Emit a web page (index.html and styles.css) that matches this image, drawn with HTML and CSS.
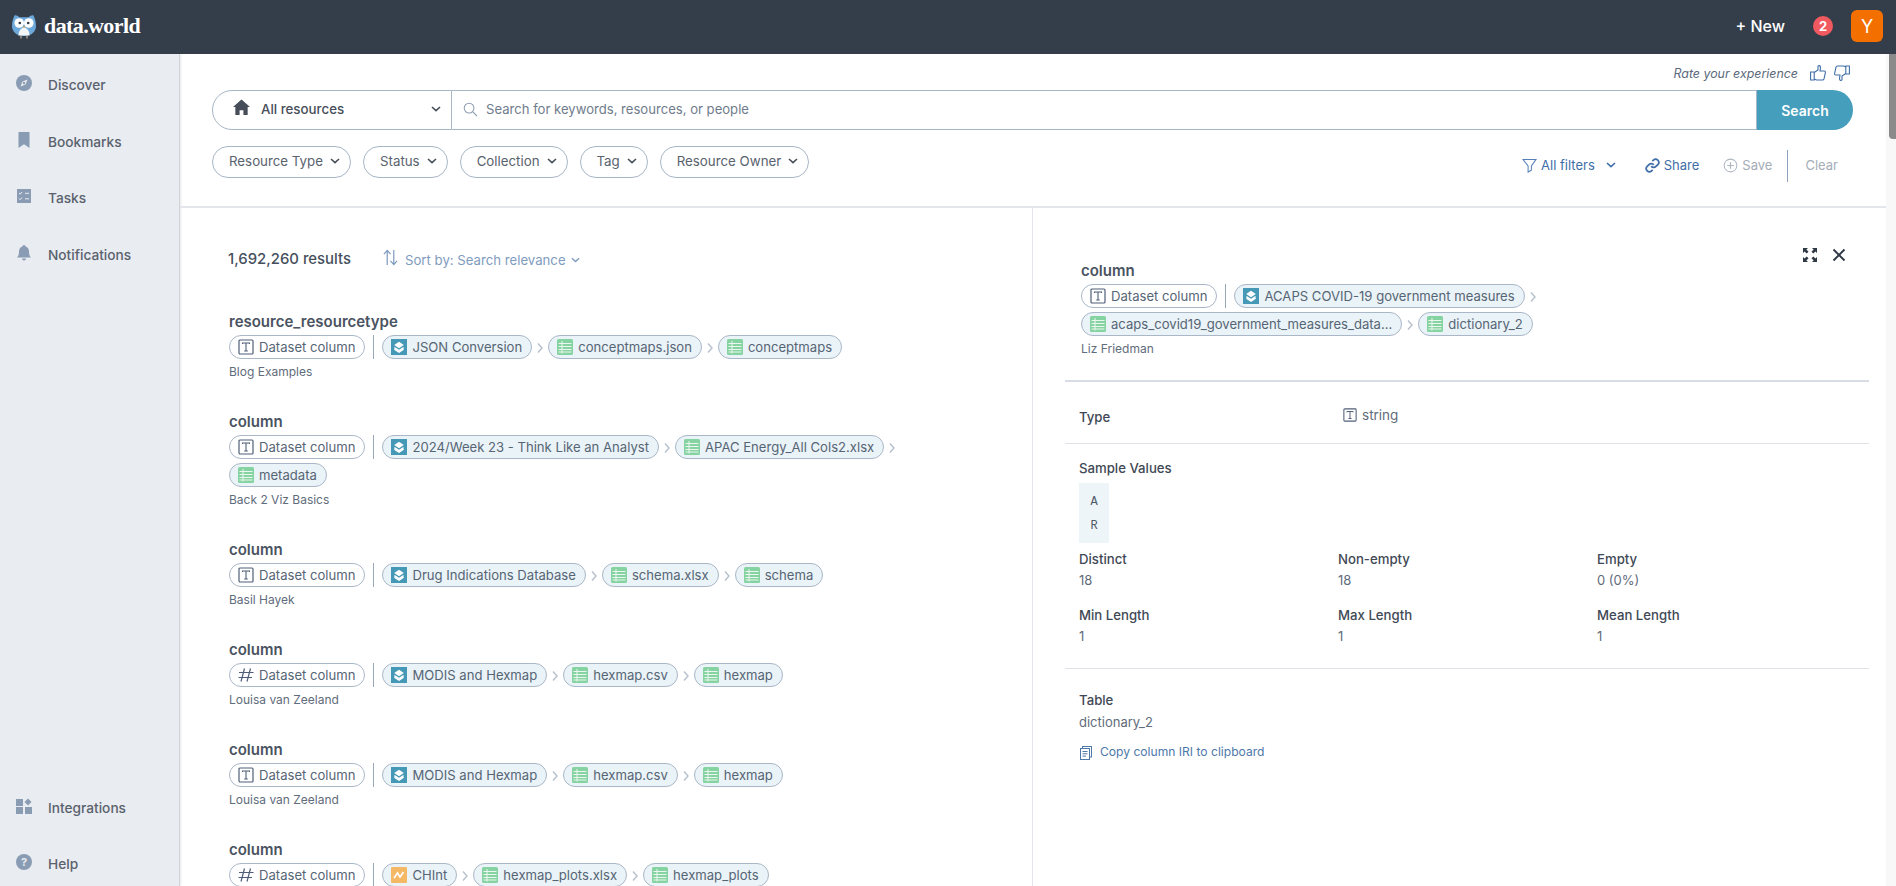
FILE: index.html
```html
<!DOCTYPE html>
<html lang="en">
<head>
<meta charset="utf-8">
<title>data.world</title>
<link rel="stylesheet" href="styles.css">
</head>
<body>
<svg class="sprite" aria-hidden="true">
  <symbol id="i-t" viewBox="0 0 16 16"><rect x="1" y="1" width="14" height="14" rx="1" fill="none" stroke="#4f5f78" stroke-width="1.2"/><path d="M4.5 5V4h7v1M8 4v8M6.2 12h3.6" fill="none" stroke="#4f5f78" stroke-width="1.1"/></symbol>
  <symbol id="i-hash" viewBox="0 0 16 16"><path d="M6.5 1.5 3 14.5M12.5 1.5 9 14.5M1 5.5h14.5M0.5 10.5H14" fill="none" stroke="#4f5f78" stroke-width="1.2"/></symbol>
  <symbol id="i-ds" viewBox="0 0 16 16"><rect width="16" height="16" fill="#4598b6"/><path d="M8 2.8 12.8 6 8 9.2 3.2 6Z" fill="#fff"/><path d="M3.4 8.6 8 11.6l4.6-3M3.4 10.2 8 13.2l4.6-3" fill="none" stroke="#fff" stroke-width="1.3"/></symbol>
  <symbol id="i-tb" viewBox="0 0 16 16"><rect width="16" height="16" rx="1.5" fill="#86d3a2"/><path d="M1.5 4.5h13M1.5 7.5h13M1.5 10.5h13M1.5 13h13M5 2v12.5" stroke="#eaf6ef" stroke-width="1" fill="none"/></symbol>
  <symbol id="i-ins" viewBox="0 0 16 16"><rect width="16" height="16" rx="1" fill="#f5b966"/><path d="M3 11 6.5 6l2.5 4 3.5-5" fill="none" stroke="#fff" stroke-width="1.6"/></symbol>
  <symbol id="i-chev" viewBox="0 0 10 6"><path d="M1 1l4 3.6L9 1" fill="none" stroke="currentColor" stroke-width="1.6"/></symbol>
  <symbol id="i-sep" viewBox="0 0 8 12"><path d="M2 1.5 6 6l-4 4.5" fill="none" stroke="#b6c0cc" stroke-width="1.4"/></symbol>
</svg>

<header class="topbar">
  <a class="brand">
    <svg class="owl" viewBox="0 0 24 26"><path d="M2.500 2.500C4 2 6 3 7.500 4.200h9C18 3 20 2 21.500 2.500 23 6 24 9 24 13c0 6-5 10-12 10S0 19 0 13C0 9 1 6 2.500 2.500Z" fill="#6ea9dc"/><circle cx="7.200" cy="10" r="4.800" fill="#fff"/><circle cx="16.800" cy="10" r="4.800" fill="#fff"/><circle cx="7.800" cy="10" r="1.300" fill="#2f3a48"/><circle cx="16.200" cy="10" r="1.300" fill="#2f3a48"/><path d="M6.500 22.500c0-5 2.500-7 5.500-8.500 3 1.500 5.500 3.500 5.500 8.500Z" fill="#f4f5f6"/><path d="M12 12.500l-1.400 2.200h2.800Z" fill="#d9a066"/><path d="M9 23v2.500M15 23v2.500" stroke="#b9a48c" stroke-width="1.300"/></svg>
    <span class="brand-name">data.world</span>
  </a>
  <div class="top-actions">
    <span class="new">+ New</span>
    <span class="badge">2</span>
    <span class="avatar">Y</span>
  </div>
</header>

<div class="shell">
  <nav class="sidebar">
    <div class="nav-group">
      <a class="nav-item"><svg class="nav-icon" viewBox="0 0 16 16"><circle cx="8" cy="8" r="8" fill="#8a9cb3"/><path d="M11.500 4.500 9.500 9.500 4.500 11.500 6.500 6.500Z" fill="#e9ecf1"/><circle cx="8" cy="8" r="1.200" fill="#8a9cb3"/></svg>Discover</a>
      <a class="nav-item"><svg class="nav-icon" viewBox="0 0 16 16"><path d="M2.500 0h11v16L8 12.300 2.500 16Z" fill="#8a9cb3"/></svg>Bookmarks</a>
      <a class="nav-item"><svg class="nav-icon" viewBox="0 0 16 16"><rect x="1" y="1" width="14" height="14" fill="#8a9cb3"/><path d="M3 5l1.200 1.200L6 4M3 10.500l1.200 1.200L6 9.500M9 5.300h4M9 10.800h4" fill="none" stroke="#e9ecf1" stroke-width="1"/></svg>Tasks</a>
      <a class="nav-item"><svg class="nav-icon" viewBox="0 0 16 16"><path d="M8 0a1.200 1.200 0 0 1 1.200 1.300C11.700 2 13 4 13 6.500c0 3 .6 4.500 2 6H1c1.400-1.500 2-3 2-6C3 4 4.300 2 6.800 1.300A1.200 1.200 0 0 1 8 0ZM6 13.500h4a2 2 0 0 1-4 0Z" fill="#8a9cb3"/></svg>Notifications</a>
    </div>
    <div class="nav-group">
      <a class="nav-item"><svg class="nav-icon" viewBox="0 0 16 16"><rect x="0" y="1" width="7" height="7" fill="#8a9cb3"/><path d="M12 .5l3.500 3.500L12 7.500 8.500 4Z" fill="#8a9cb3"/><rect x="0" y="9" width="7" height="7" fill="#8a9cb3"/><rect x="9" y="9" width="7" height="7" fill="#8a9cb3"/></svg>Integrations</a>
      <a class="nav-item"><svg class="nav-icon" viewBox="0 0 16 16"><circle cx="8" cy="8" r="8" fill="#8a9cb3"/><text x="8" y="11.500" text-anchor="middle" class="help-q">?</text></svg>Help</a>
    </div>
  </nav>

  <div class="content">
    <section class="toolbar">
      <div class="rate">
        <em>Rate your experience</em>
        <svg class="thumb" viewBox="0 0 16 16"><path d="M.6 7h3.600v8H.6ZM4.200 7.500 8 5V1.500C8 .5 9.800.2 10.300 1.500 10.800 3 10 5 10 6h4.200c1 0 1.400.8 1.200 1.600l-1.400 6.300c-.2.800-.7 1.100-1.400 1.100H6.500l-2.300-1" fill="none" stroke="#3f6ea8" stroke-width="1.100"/></svg>
        <svg class="thumb" viewBox="0 0 16 16"><path d="M15.400 9h-3.600V1h3.600ZM11.800 8.500 8 11v3.500c0 1-1.800 1.300-2.300 0C5.200 13 6 11 6 10H1.800C.8 10 .4 9.200.6 8.400L2 2.100C2.200 1.300 2.700 1 3.400 1h6.100l2.300 1" fill="none" stroke="#3f6ea8" stroke-width="1.100"/></svg>
      </div>
      <div class="searchbar">
        <div class="scope">
          <svg class="home" viewBox="0 0 16 16"><path d="M8 .5 16 7.500h-2.200V15H9.800v-4.500H6.200V15H2.200V7.500H0Z" fill="#474e59"/></svg>
          <span class="scope-label">All resources</span>
          <svg class="chev" viewBox="0 0 10 6"><use href="#i-chev"/></svg>
        </div>
        <div class="query">
          <svg class="lens" viewBox="0 0 16 16"><circle cx="6.500" cy="6.500" r="5.200" fill="none" stroke="#8d9cb0" stroke-width="1.100"/><path d="M10.500 10.500 15 15" stroke="#8d9cb0" stroke-width="1.200"/></svg>
          <span>Search for keywords, resources, or people</span>
        </div>
        <button class="search-btn">Search</button>
      </div>
      <div class="filters">
        <div class="filter-pills">
          <span class="fpill">Resource Type<svg class="chev" viewBox="0 0 10 6"><use href="#i-chev"/></svg></span>
          <span class="fpill">Status<svg class="chev" viewBox="0 0 10 6"><use href="#i-chev"/></svg></span>
          <span class="fpill">Collection<svg class="chev" viewBox="0 0 10 6"><use href="#i-chev"/></svg></span>
          <span class="fpill">Tag<svg class="chev" viewBox="0 0 10 6"><use href="#i-chev"/></svg></span>
          <span class="fpill">Resource Owner<svg class="chev" viewBox="0 0 10 6"><use href="#i-chev"/></svg></span>
        </div>
        <div class="filter-actions">
          <span class="fa fa-all"><svg class="fa-ic" viewBox="0 0 16 16"><path d="M1 1.500h14L10 8.500v4.500l-3.500 2V8.500Z" fill="none" stroke="#5480b5" stroke-width="1.100"/></svg>All filters<svg class="chev fa-chev" viewBox="0 0 10 6"><use href="#i-chev"/></svg></span>
          <span class="fa fa-share"><svg class="fa-ic" viewBox="0 0 24 24"><path d="M10 13a5 5 0 0 0 7.540.54l3-3a5 5 0 0 0-7.070-7.070l-1.720 1.710M14 11a5 5 0 0 0-7.540-.54l-3 3a5 5 0 0 0 7.070 7.070l1.710-1.710" fill="none" stroke="#3f6ea8" stroke-width="2.800"/></svg>Share</span>
          <span class="fa fa-save"><svg class="fa-ic" viewBox="0 0 16 16"><circle cx="8" cy="8" r="6.800" fill="none" stroke="#aeb6c0" stroke-width="1.100"/><path d="M8 4.500v7M4.500 8h7" stroke="#aeb6c0" stroke-width="1.300"/></svg>Save</span>
          <span class="fa-div"></span>
          <span class="fa fa-clear">Clear</span>
        </div>
      </div>
    </section>

    <div class="split">
      <section class="results">
        <div class="results-head">
          <strong>1,692,260 results</strong>
          <svg class="sort-ic" viewBox="0 0 16 18"><path d="M4.500 17V2M1 5.500 4.500 1.500 8 5.500M11.500 1v15M8 12.500l3.500 4 3.500-4" fill="none" stroke="#7f9cc0" stroke-width="1.300"/></svg>
          <span class="sort">Sort by: Search relevance<svg class="chev" viewBox="0 0 10 6"><use href="#i-chev"/></svg></span>
        </div>

        <article class="item">
          <h3>resource_resourcetype</h3>
          <div class="crumbs">
            <span class="pill plain"><svg class="pic"><use href="#i-t"/></svg>Dataset column</span><span class="vr"></span>
            <span class="pill"><svg class="pic"><use href="#i-ds"/></svg>JSON Conversion</span><svg class="sep"><use href="#i-sep"/></svg>
            <span class="pill"><svg class="pic"><use href="#i-tb"/></svg>conceptmaps.json</span><svg class="sep"><use href="#i-sep"/></svg>
            <span class="pill"><svg class="pic"><use href="#i-tb"/></svg>conceptmaps</span>
          </div>
          <p class="owner">Blog Examples</p>
        </article>

        <article class="item">
          <h3>column</h3>
          <div class="crumbs">
            <span class="pill plain"><svg class="pic"><use href="#i-t"/></svg>Dataset column</span><span class="vr"></span>
            <span class="pill"><svg class="pic"><use href="#i-ds"/></svg>2024/Week 23 - Think Like an Analyst</span><svg class="sep"><use href="#i-sep"/></svg>
            <span class="pill"><svg class="pic"><use href="#i-tb"/></svg>APAC Energy_All Cols2.xlsx</span><svg class="sep"><use href="#i-sep"/></svg>
            <span class="pill"><svg class="pic"><use href="#i-tb"/></svg>metadata</span>
          </div>
          <p class="owner">Back 2 Viz Basics</p>
        </article>

        <article class="item">
          <h3>column</h3>
          <div class="crumbs">
            <span class="pill plain"><svg class="pic"><use href="#i-t"/></svg>Dataset column</span><span class="vr"></span>
            <span class="pill"><svg class="pic"><use href="#i-ds"/></svg>Drug Indications Database</span><svg class="sep"><use href="#i-sep"/></svg>
            <span class="pill"><svg class="pic"><use href="#i-tb"/></svg>schema.xlsx</span><svg class="sep"><use href="#i-sep"/></svg>
            <span class="pill"><svg class="pic"><use href="#i-tb"/></svg>schema</span>
          </div>
          <p class="owner">Basil Hayek</p>
        </article>

        <article class="item">
          <h3>column</h3>
          <div class="crumbs">
            <span class="pill plain"><svg class="pic"><use href="#i-hash"/></svg>Dataset column</span><span class="vr"></span>
            <span class="pill"><svg class="pic"><use href="#i-ds"/></svg>MODIS and Hexmap</span><svg class="sep"><use href="#i-sep"/></svg>
            <span class="pill"><svg class="pic"><use href="#i-tb"/></svg>hexmap.csv</span><svg class="sep"><use href="#i-sep"/></svg>
            <span class="pill"><svg class="pic"><use href="#i-tb"/></svg>hexmap</span>
          </div>
          <p class="owner">Louisa van Zeeland</p>
        </article>

        <article class="item">
          <h3>column</h3>
          <div class="crumbs">
            <span class="pill plain"><svg class="pic"><use href="#i-t"/></svg>Dataset column</span><span class="vr"></span>
            <span class="pill"><svg class="pic"><use href="#i-ds"/></svg>MODIS and Hexmap</span><svg class="sep"><use href="#i-sep"/></svg>
            <span class="pill"><svg class="pic"><use href="#i-tb"/></svg>hexmap.csv</span><svg class="sep"><use href="#i-sep"/></svg>
            <span class="pill"><svg class="pic"><use href="#i-tb"/></svg>hexmap</span>
          </div>
          <p class="owner">Louisa van Zeeland</p>
        </article>

        <article class="item">
          <h3>column</h3>
          <div class="crumbs">
            <span class="pill plain"><svg class="pic"><use href="#i-hash"/></svg>Dataset column</span><span class="vr"></span>
            <span class="pill"><svg class="pic"><use href="#i-ins"/></svg>CHInt</span><svg class="sep"><use href="#i-sep"/></svg>
            <span class="pill"><svg class="pic"><use href="#i-tb"/></svg>hexmap_plots.xlsx</span><svg class="sep"><use href="#i-sep"/></svg>
            <span class="pill"><svg class="pic"><use href="#i-tb"/></svg>hexmap_plots</span>
          </div>
        </article>
      </section>

      <aside class="detail">
        <div class="detail-tools">
          <svg class="tool" viewBox="0 0 14 14"><path d="M0 0h5L3.400 1.600 5.500 3.700 3.700 5.500 1.600 3.400 0 5ZM14 0v5l-1.600-1.600-2.100 2.100-1.800-1.800 2.100-2.100L9 0ZM0 14V9l1.600 1.600 2.100-2.100 1.800 1.800-2.100 2.100L5 14ZM14 14H9l1.600-1.600-2.100-2.100 1.800-1.800 2.100 2.100L14 9Z" fill="#2f3845"/></svg>
          <svg class="tool" viewBox="0 0 14 14"><path d="M1.500 1.500l11 11M12.500 1.500l-11 11" stroke="#2f3845" stroke-width="1.900"/></svg>
        </div>
        <div class="d-head">
          <h3>column</h3>
          <div class="crumbs">
            <span class="pill plain"><svg class="pic"><use href="#i-t"/></svg>Dataset column</span><span class="vr"></span>
            <span class="pill"><svg class="pic"><use href="#i-ds"/></svg>ACAPS COVID-19 government measures</span><svg class="sep"><use href="#i-sep"/></svg>
            <span class="pill"><svg class="pic"><use href="#i-tb"/></svg>acaps_covid19_government_measures_data...</span><svg class="sep"><use href="#i-sep"/></svg>
            <span class="pill"><svg class="pic"><use href="#i-tb"/></svg>dictionary_2</span>
          </div>
          <p class="owner">Liz Friedman</p>
        </div>

        <div class="d-type">
          <span class="label">Type</span>
          <span class="type-val"><svg class="pic-sm"><use href="#i-t"/></svg>string</span>
        </div>

        <div class="d-stats">
          <div class="label">Sample Values</div>
          <div class="samples"><span>A</span><span>R</span></div>
          <div class="stat-grid">
            <div class="stat"><span class="label">Distinct</span><span class="val">18</span></div>
            <div class="stat"><span class="label">Non-empty</span><span class="val">18</span></div>
            <div class="stat"><span class="label">Empty</span><span class="val">0 (0%)</span></div>
            <div class="stat"><span class="label">Min Length</span><span class="val">1</span></div>
            <div class="stat"><span class="label">Max Length</span><span class="val">1</span></div>
            <div class="stat"><span class="label">Mean Length</span><span class="val">1</span></div>
          </div>
        </div>

        <div class="d-table">
          <div class="stat"><span class="label">Table</span><span class="val">dictionary_2</span></div>
          <a class="copy"><svg class="copy-ic" viewBox="0 0 12 14"><rect x="2.500" y=".5" width="9" height="10.500" fill="none" stroke="#4d78aa"/><rect x=".5" y="2.500" width="9" height="11" fill="#fff" stroke="#4d78aa"/><path d="M2.500 5.500h5M2.500 7.800h5M2.500 10.100h3.500" stroke="#4d78aa"/></svg>Copy column IRI to clipboard</a>
        </div>
      </aside>
    </div>
  </div>

  <div class="scrollbar"><div class="scroll-thumb"></div></div>
</div>
</body>
</html>
```

FILE: styles.css
```css
* { box-sizing: border-box; }
html, body { margin: 0; height: 100%; overflow: hidden; }
body {
  font-family: Inter, "Noto Sans", sans-serif;
  font-size: 13px;
  color: #4f5a68;
  background: #fff;
  display: flex;
  flex-direction: column;
  height: 886px;
}
.sprite { display: none; }
h3, p { margin: 0; }

/* top bar */
.topbar {
  flex: 0 0 54px;
  background: #343d4a;
  display: flex;
  align-items: center;
  justify-content: space-between;
  padding: 0 13px 2px 12px;
}
.brand { display: flex; align-items: center; gap: 8px; }
.owl { width: 24px; height: 26px; }
.brand-name {
  font-family: "Liberation Serif", serif;
  font-weight: 700;
  font-size: 22px;
  letter-spacing: -0.6px;
  color: #fff;
}
.top-actions { display: flex; align-items: center; }
.new { font-size: 16px; font-weight: 500; color: #fff; margin-right: 28px; }
.badge {
  width: 20px; height: 20px; border-radius: 50%;
  background: #f0595f; color: #fff;
  font-size: 13px; font-weight: 700;
  display: flex; align-items: center; justify-content: center;
  margin-right: 18px;
}
.avatar {
  width: 32px; height: 32px; border-radius: 6px;
  background: #f37000; color: #fff; font-size: 18px;
  display: flex; align-items: center; justify-content: center;
}

/* shell */
.shell { flex: 1; display: flex; min-height: 0; }
.sidebar {
  flex: 0 0 180px;
  background: #e9ecf1;
  border-right: 1px solid #d0d5dc;
  box-shadow: 1px 0 2px rgba(60,70,85,.12);
  display: flex;
  flex-direction: column;
  justify-content: space-between;
  padding: 19.500px 0 10px;
}
.nav-group { display: flex; flex-direction: column; gap: 33px; }
.nav-item {
  display: flex; align-items: center; gap: 16px;
  height: 23.500px;
  padding-left: 16px;
  font-size: 13.700px; font-weight: 500; color: #5a626d;
}
.nav-icon { width: 16px; height: 16px; flex: none; margin-top: -4px; }
.help-q { font: 700 11px Inter, sans-serif; fill: #e9ecf1; }

.content { flex: 1; min-width: 0; display: flex; flex-direction: column; }
.scrollbar { flex: 0 0 10px; background: #f8f8f8; padding-left: 3px; }
.scroll-thumb { height: 85px; background: #8a8a8a; border-radius: 0 0 0 4px; }

/* toolbar */
.toolbar {
  flex: 0 0 154px;
  border-bottom: 2px solid #e3e7ec;
  padding: 0 33px 0 32px;
}
.rate {
  height: 36px;
  display: flex; align-items: center; justify-content: flex-end;
  gap: 8px;
  padding: 2px 3px 0 0;
}
.rate em { font-size: 12.400px; color: #5c6a7c; font-style: italic; margin-right: 4px; }
.thumb { width: 16px; height: 16px; }
.searchbar { display: flex; height: 40px; }
.scope {
  flex: 0 0 240px;
  display: flex; align-items: center;
  border: 1px solid #a9b6c6;
  border-radius: 20px 0 0 20px;
  padding: 0 10px 2px 20px;
  color: #474e59;
}
.home { width: 17px; height: 17px; margin-right: 11px; margin-top: -3px; }
.scope-label { flex: 1; font-size: 13.300px; font-weight: 500; }
.chev { width: 10px; height: 6px; color: #474e59; flex: none; }
.query {
  flex: 1;
  display: flex; align-items: center; gap: 8px;
  border: 1px solid #a9b6c6;
  border-left: 0;
  padding: 0 0 2px 11px;
  font-size: 13.100px; color: #6f7c8c;
}
.lens { width: 15px; height: 15px; }
.search-btn {
  flex: 0 0 96px;
  border: 0;
  background: #459ebb;
  color: #fff;
  font: 600 14px Inter, sans-serif;
  border-radius: 0 20px 20px 0;
}
.filters { display: flex; justify-content: space-between; margin-top: 16px; }
.filter-pills { display: flex; gap: 12px; }
.fpill {
  height: 32px;
  display: flex; align-items: center; gap: 7px;
  padding: 0 10px 2px 16px;
  border: 1px solid #a9b6c6;
  border-radius: 16px;
  font-size: 13.300px; color: #5a626d;
}
.filter-actions { display: flex; align-items: center; height: 32px; margin-top: 4px; padding-bottom: 2px; }
.fa { display: flex; align-items: center; font-size: 13px; }
.fa-ic { width: 15px; height: 15px; margin-right: 4px; }
.fa-all { color: #3f6ea8; margin-right: 29px; }
.fa-chev { margin-left: 11px; color: #3f6ea8; }
.fa-share { color: #3f6ea8; margin-right: 24px; }
.fa-save { color: #a5adb8; margin-right: 15px; }
.fa-div { width: 1px; height: 32px; background: #8ea3bb; margin: 2px 17px 0 0; }
.fa-clear { color: #a5adb8; margin-right: 15px; }

/* split */
.split { flex: 1; min-height: 0; display: flex; overflow: hidden; }
.results {
  flex: 0 0 853px;
  border-right: 1px solid #e3e7ec;
  padding: 40px 48px 0 48px;
}
.results-head { display: flex; align-items: center; height: 22px; margin-bottom: 42px; }
.results-head strong { font-size: 14.900px; font-weight: 500; color: #454f5c; width: 155px; }
.sort-ic { width: 15px; height: 17px; margin-right: 7px; margin-top: -3px; }
.sort { display: flex; align-items: center; gap: 5px; font-size: 13.200px; color: #7f9cc0; margin-top: 2px; }
.sort .chev { color: #7f9cc0; width: 9px; }
.item { margin-bottom: 31px; padding-left: 1px; }
.item h3, .d-head h3 {
  font-size: 15px; font-weight: 600; line-height: 20px; color: #4a5361; margin-bottom: 3px;
}
.crumbs { display: flex; flex-wrap: wrap; align-items: center; gap: 4px 0; }
.pill {
  height: 24px;
  display: inline-flex; align-items: center; gap: 5px;
  padding: 0 9px 0 8px;
  border: 1px solid #aab7c7;
  border-radius: 12px;
  background: #eaf3f7;
  font-size: 13.100px; color: #566575;
  white-space: nowrap;
}
.pill.plain { background: #fff; }
.pic { width: 16px; height: 16px; flex: none; }
.vr { width: 1px; height: 24px; background: #9aa7b6; margin: 0 8px; }
.sep { width: 8px; height: 12px; margin: 2px 4px 0; flex: none; }
.owner { font-size: 12px; line-height: 18px; color: #5f6c7b; margin-top: 4px; }

/* detail */
.detail { flex: 1; min-width: 0; margin: 0 17px 0 32px; position: relative; }
.detail-tools {
  position: absolute; top: 40px; right: 23px;
  display: flex; gap: 15px;
}
.tool { width: 14px; height: 14px; }
.d-head { padding: 53px 48px 22px 16px; }
.d-type {
  border-top: 2px solid #d8dde5;
  display: flex;
  padding: 26px 0 17px 14px;
  line-height: 18px;
}
.d-type .label { width: 264px; }
.label { font-weight: 500; font-size: 13.200px; line-height: 18px; color: #3f4955; }
.type-val { display: flex; align-items: center; gap: 5px; color: #5f6c7b; margin-top: -4px; font-size: 13.500px; }
.pic-sm { width: 14px; height: 14px; }
.d-stats { border-top: 1px solid #dfe3e8; padding: 15px 0 23px 14px; }
.samples {
  width: 30px; height: 60px; margin: 6px 0 7px;
  padding-top: 2px;
  background: #edf5f8;
  display: flex; flex-direction: column; align-items: center; justify-content: center; gap: 6px;
  font: 12px/18px "Liberation Mono", monospace; color: #4f5a68;
}
.stat-grid { display: grid; grid-template-columns: 259px 259px 1fr; row-gap: 17px; }
.stat { display: flex; flex-direction: column; gap: 3px; }
.d-table .stat { gap: 4px; }
.val { font-size: 13px; line-height: 18px; color: #5f6c7b; }
.d-table { border-top: 1px solid #dfe3e8; padding: 22px 0 0 14px; }
.copy { display: flex; align-items: center; gap: 8px; margin-top: 12px; font-size: 12.100px; line-height: 18px; color: #4d78aa; }
.copy-ic { width: 12px; height: 14px; margin-left: 1px; margin-top: 2px; }
```
